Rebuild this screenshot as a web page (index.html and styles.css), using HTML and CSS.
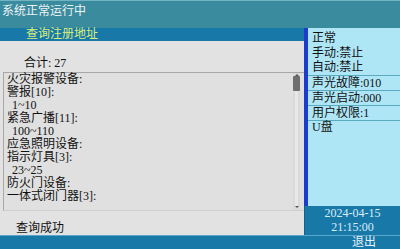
FILE: index.html
```html
<!DOCTYPE html>
<html lang="zh">
<head>
<meta charset="utf-8">
<link rel="stylesheet" href="styles.css">
</head>
<body>
<div class="app">
  <div class="titlebar">系统正常运行中</div>
  <div class="main">
    <div class="left">
      <div class="subbar">查询注册地址</div>
      <div class="content">
        <div class="total">合计: 27</div>
        <div class="listbox">
          <div class="items">
            <div class="item">火灾报警设备:</div>
            <div class="item">警报[10]:</div>
            <div class="item sub">1~10</div>
            <div class="item">紧急广播[11]:</div>
            <div class="item sub">100~110</div>
            <div class="item">应急照明设备:</div>
            <div class="item">指示灯具[3]:</div>
            <div class="item sub">23~25</div>
            <div class="item">防火门设备:</div>
            <div class="item">一体式闭门器[3]:</div>
          </div>
          <div class="scroll">
            <div class="arrow up"></div>
            <div class="thumb"></div>
            <div class="track"></div>
            <div class="arrow down"></div>
          </div>
        </div>
        <div class="status">查询成功</div>
      </div>
    </div>
    <div class="right">
      <div class="panel">
        <div class="group">
          <div class="line">正常</div>
          <div class="line">手动:禁止</div>
          <div class="line">自动:禁止</div>
        </div>
        <div class="row">声光故障:010</div>
        <div class="row">声光启动:000</div>
        <div class="row">用户权限:1</div>
        <div class="row last">U盘</div>
      </div>
      <div class="clock">
        <div>2024-04-15</div>
        <div>21:15:00</div>
      </div>
    </div>
  </div>
  <div class="footer"><span class="exit">退出</span></div>
</div>
</body>
</html>
```

FILE: styles.css
```css
html, body {
  margin: 0;
  padding: 0;
}
body {
  width: 400px;
  height: 249px;
  overflow: hidden;
  font-family: "Liberation Serif", "Noto Sans CJK SC", serif;
  font-size: 12px;
  color: #111;
  background: #e2e2e2;
}
.app {
  display: flex;
  flex-direction: column;
  width: 400px;
  height: 249px;
}
.titlebar {
  box-sizing: border-box;
  height: 28px;
  background: #3b8b9f;
  border-top: 1px solid #72b4c4;
  color: #eef4f4;
  line-height: 16px;
  padding: 2px 0 0 2px;
}
.main {
  display: flex;
  height: 207px;
}
.left {
  width: 304px;
  display: flex;
  flex-direction: column;
}
.subbar {
  height: 13px;
  line-height: 13px;
  background: #1878a8;
  color: #dcef78;
  padding-left: 26px;
}
.content {
  flex: 1;
  display: flex;
  flex-direction: column;
  background: #e2e2e2;
}
.total {
  margin-top: 15px;
  line-height: 14px;
  padding-left: 24px;
}
.listbox {
  margin: 2px 0 0 3px;
  height: 137px;
  border-top: 1px solid #a8a8a8;
  border-left: 1px solid #a8a8a8;
  border-bottom: 1px solid #cfcfcf;
  display: flex;
  background: #e0e0e0;
}
.items {
  flex: 1;
  padding-left: 3px;
}
.item {
  line-height: 13px;
  height: 13px;
  white-space: nowrap;
}
.item.sub {
  padding-left: 5px;
}
.scroll {
  width: 7px;
  margin-right: 4px;
  display: flex;
  flex-direction: column;
  align-items: center;
  background: #dadada;
}
.arrow {
  width: 0;
  height: 0;
  border-left: 2px solid transparent;
  border-right: 2px solid transparent;
}
.arrow.up {
  border-bottom: 2px solid #555;
  margin-top: 1px;
}
.arrow.down {
  border-top: 2px solid #555;
  margin-bottom: 2px;
}
.thumb {
  width: 7px;
  height: 15px;
  background: #6e6e6e;
  border-radius: 1px;
}
.track {
  flex: 1;
  width: 3px;
  background: #e8e8e8;
}
.status {
  margin-top: 10px;
  line-height: 14px;
  padding-left: 16px;
}
.right {
  width: 96px;
  display: flex;
  flex-direction: column;
}
.panel {
  flex: 1;
  background: #aee6f6;
  border-left: 4px solid #1c3ccc;
  display: flex;
  flex-direction: column;
}
.group {
  padding-top: 3px;
  border-bottom: 1px solid #5aaac2;
}
.line {
  line-height: 14.5px;
  padding-left: 4px;
}
.row {
  padding-top: 1px;
  line-height: 13px;
  padding-left: 4px;
  border-bottom: 1px solid #5aaac2;
}
.row.last {
  border-bottom: none;
  padding-top: 0;
}
.clock {
  height: 29px;
  background: #1878a8;
  border-left: 1px solid #0f6290;
  color: #d8eef8;
  text-align: center;
  line-height: 14px;
}
.footer {
  box-sizing: border-box;
  height: 14px;
  background: #1878a8;
  border-top: 1px solid #5aa6c8;
  display: flex;
  justify-content: flex-end;
  padding-right: 24px;
  color: #e4f2fa;
  line-height: 13px;
}
```
